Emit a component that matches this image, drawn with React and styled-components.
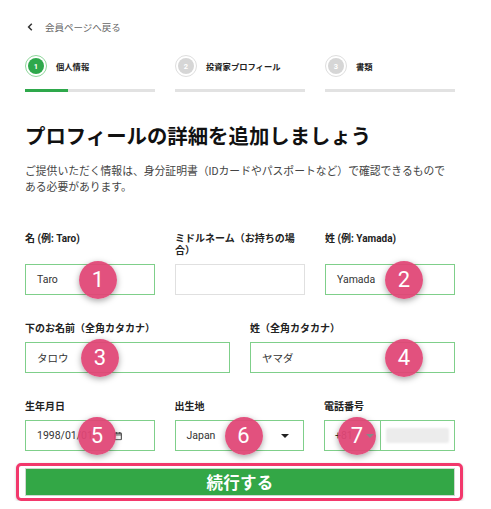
import React from "react";
import styled, { createGlobalStyle } from "styled-components";

const GlobalStyle = createGlobalStyle`
  html, body {
    margin: 0;
    padding: 0;
    background: #fff;
  }
  body {
    font-family: Roboto, "Noto Sans CJK JP", "Noto Sans", sans-serif;
    color: #222;
  }
`;

const steps = [
  { num: 1, label: "個人情報", active: true },
  { num: 2, label: "投資家プロフィール" },
  { num: 3, label: "書類" },
];

const CalendarIcon = () => (
  <svg width="8" height="9" viewBox="0 0 9 10" fill="none">
    <rect x="0.75" y="1.75" width="7.5" height="7.5" rx="0.8" stroke="#444" strokeWidth="1.2" />
    <line x1="2.5" y1="0.5" x2="2.5" y2="2.5" stroke="#444" strokeWidth="1.2" />
    <line x1="6.5" y1="0.5" x2="6.5" y2="2.5" stroke="#444" strokeWidth="1.2" />
    <line x1="0.75" y1="3.8" x2="8.25" y2="3.8" stroke="#444" strokeWidth="1" />
  </svg>
);

const App = () => {
  return (
    <>
      <GlobalStyle />
      <Page>
        <BackLink>
          <svg width="6" height="8" viewBox="0 0 6 8">
            <path d="M4.8 0.8 L1.6 4 L4.8 7.2" stroke="#333" strokeWidth="1.5" fill="none" />
          </svg>
          <span>会員ページへ戻る</span>
        </BackLink>

        <Steps>
          {steps.map((s) => (
            <Step key={s.num}>
              <StepHead>
                <StepCircle $active={s.active}>
                  <span>{s.num}</span>
                </StepCircle>
                <StepLabel>{s.label}</StepLabel>
              </StepHead>
              <StepBar>{s.active && <StepFill />}</StepBar>
            </Step>
          ))}
        </Steps>

        <Title>プロフィールの詳細を追加しましょう</Title>
        <Lead>
          ご提供いただく情報は、身分証明書（IDカードやパスポートなど）で確認できるものである必要があります。
        </Lead>

        <Form>
          <Row $cols={3}>
            <Field>
              <Label $tall>名 (例: Taro)</Label>
              <InputBox>
                <Value>Taro</Value>
                <Badge $left={53}>1</Badge>
              </InputBox>
            </Field>
            <Field>
              <Label $tall>ミドルネーム（お持ちの場合）</Label>
              <InputBox $empty />
            </Field>
            <Field>
              <Label $tall>姓 (例: Yamada)</Label>
              <InputBox>
                <Value>Yamada</Value>
                <Badge $left={59}>2</Badge>
              </InputBox>
            </Field>
          </Row>

          <Row $cols={2}>
            <Field>
              <Label>下のお名前（全角カタカナ）</Label>
              <InputBox>
                <Value>タロウ</Value>
                <Badge $left={55}>3</Badge>
              </InputBox>
            </Field>
            <Field>
              <Label>姓（全角カタカナ）</Label>
              <InputBox>
                <Value>ヤマダ</Value>
                <Badge $left={134}>4</Badge>
              </InputBox>
            </Field>
          </Row>

          <Row $cols={3}>
            <Field>
              <Label>生年月日</Label>
              <InputBox>
                <Value>1998/01/01</Value>
                <IconSlot $left={88}>
                  <CalendarIcon />
                </IconSlot>
                <Badge $left={52}>5</Badge>
              </InputBox>
            </Field>
            <Field>
              <Label>出生地</Label>
              <InputBox>
                <Value>Japan</Value>
                <Caret $right={14} />
                <Badge $left={49}>6</Badge>
              </InputBox>
            </Field>
            <Field>
              <Label>電話番号</Label>
              <PhoneBox>
                <PhoneCode>
                  <Value $pad={10}>+81</Value>
                  <Caret $right={6} $light />
                </PhoneCode>
                <PhoneNumber>
                  <Blurred />
                </PhoneNumber>
                <Badge $left={13}>7</Badge>
              </PhoneBox>
            </Field>
          </Row>
        </Form>

        <Highlight>
          <SubmitButton>続行する</SubmitButton>
        </Highlight>
      </Page>
    </>
  );
};

// Styled Components
const Page = styled.div`
  width: 430px;
  padding: 20px 0 0 25px;
`;

const BackLink = styled.div`
  display: flex;
  align-items: center;
  gap: 12px;
  height: 14px;
  padding-left: 2px;
  font-size: 9.5px;
  color: #666;
`;

const Steps = styled.div`
  display: grid;
  grid-template-columns: repeat(3, 1fr);
  column-gap: 20px;
  margin-top: 21px;
`;

const Step = styled.div`
  display: flex;
  flex-direction: column;
  gap: 12px;
`;

const StepHead = styled.div`
  display: flex;
  align-items: center;
  gap: 9px;
`;

const StepCircle = styled.div`
  width: 22px;
  height: 22px;
  box-sizing: border-box;
  border-radius: 50%;
  border: 1px solid ${(p) => (p.$active ? "#8fd79b" : "#dedede")};
  padding: 2px;
  flex-shrink: 0;

  span {
    display: flex;
    align-items: center;
    justify-content: center;
    width: 100%;
    height: 100%;
    border-radius: 50%;
    background: ${(p) => (p.$active ? "#2ea84b" : "#d6d6d6")};
    color: #fff;
    font-size: 7.5px;
    font-weight: 700;
  }
`;

const StepLabel = styled.div`
  font-size: 8.3px;
  font-weight: 700;
  color: #222;
`;

const StepBar = styled.div`
  height: 3px;
  background: #e2e2e2;
`;

const StepFill = styled.div`
  width: 33%;
  height: 100%;
  background: #2ea84b;
`;

const Title = styled.h1`
  margin: 31px 0 0;
  font-size: 20.4px;
  line-height: 28px;
  font-weight: 700;
  color: #111;
`;

const Lead = styled.p`
  margin: 13px 0 0;
  width: 428px;
  font-size: 10.8px;
  line-height: 16px;
  color: #444;
`;

const Form = styled.div`
  display: flex;
  flex-direction: column;
  gap: 28px;
  margin-top: 37px;
`;

const Row = styled.div`
  display: grid;
  grid-template-columns: repeat(${(p) => p.$cols}, 1fr);
  column-gap: 20px;
`;

const Field = styled.div`
  display: flex;
  flex-direction: column;
  gap: 7px;
`;

const Label = styled.div`
  font-size: 10px;
  line-height: 12px;
  font-weight: 700;
  color: #222;
  min-height: ${(p) => (p.$tall ? "24px" : "12px")};
`;

const InputBox = styled.div`
  position: relative;
  display: flex;
  align-items: center;
  height: 31px;
  box-sizing: border-box;
  border: 1px solid ${(p) => (p.$empty ? "#e0e0e0" : "#7fcf8a")};
  background: #fff;
`;

const Value = styled.span`
  padding-left: ${(p) => p.$pad ?? 11}px;
  font-size: 10.5px;
  color: #333;
`;

const IconSlot = styled.span`
  position: absolute;
  left: ${(p) => p.$left}px;
  top: 50%;
  transform: translateY(-50%);
  display: flex;
`;

const Caret = styled.span`
  position: absolute;
  right: ${(p) => p.$right}px;
  top: 50%;
  margin-top: -2px;
  width: 0;
  height: 0;
  border-left: 4px solid transparent;
  border-right: 4px solid transparent;
  border-top: 4px solid ${(p) => (p.$light ? "#888" : "#222")};
  z-index: 2;
`;

const PhoneBox = styled(InputBox)`
  align-items: stretch;
`;

const PhoneCode = styled.div`
  position: relative;
  display: flex;
  align-items: center;
  width: 55px;
  border-right: 1px solid #7fcf8a;
`;

const PhoneNumber = styled.div`
  flex: 1;
  display: flex;
  align-items: center;
  padding: 0 5px;
`;

const Blurred = styled.div`
  width: 63px;
  height: 15px;
  background: #ececec;
  border-radius: 2px;
  filter: blur(1px);
`;

const Badge = styled.div`
  position: absolute;
  left: ${(p) => p.$left}px;
  top: 50%;
  margin-top: -19px;
  width: 38px;
  height: 38px;
  border-radius: 50%;
  background: rgba(224, 70, 118, 0.94);
  color: #fff;
  display: flex;
  align-items: center;
  justify-content: center;
  font-family: Roboto, sans-serif;
  font-size: 22px;
  box-shadow: 0 2px 6px rgba(0, 0, 0, 0.35);
  z-index: 1;
`;

const Highlight = styled.div`
  margin: 12px -8px 0 -9px;
  padding: 2px 5px 2px 6px;
  border: 3px solid #f2386c;
  border-radius: 5px;
  box-shadow: 0 1px 3px rgba(0, 0, 0, 0.2);
`;

const SubmitButton = styled.div`
  height: 28px;
  box-sizing: border-box;
  border: 1px solid #cfd8cf;
  background: #33a746;
  color: #fff;
  display: flex;
  align-items: center;
  justify-content: center;
  font-size: 16.5px;
  font-weight: 700;
  letter-spacing: 0.3px;
`;

export default App;
